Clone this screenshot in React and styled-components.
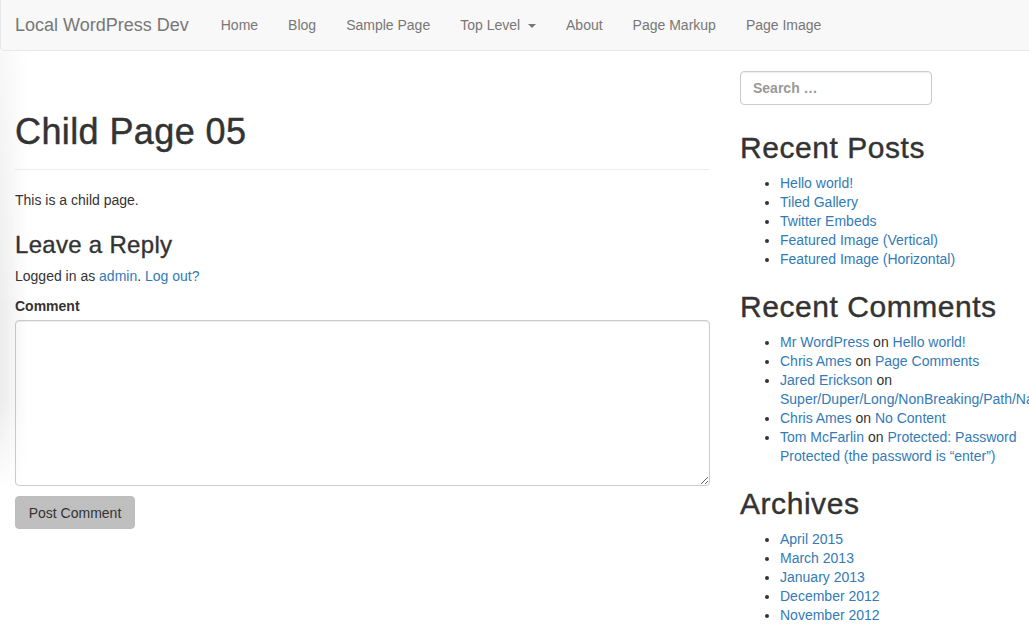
import React from 'react';
import styled, { createGlobalStyle } from 'styled-components';

const GlobalStyle = createGlobalStyle`
  html, body {
    margin: 0;
    padding: 0;
    background: #fff;
    overflow: hidden;
  }

  body {
    font-family: 'Liberation Sans', Arial, sans-serif;
    font-size: 14px;
    line-height: 20px;
    color: #333;
  }

  a {
    color: #337ab7;
    text-decoration: none;
  }
`;

const Page = styled.div`
  width: 1088px;
`;

const Navbar = styled.nav`
  display: flex;
  align-items: center;
  height: 50px;
  background: #f8f8f8;
  border-bottom: 1px solid #e7e7e7;
  border-left: 1px solid #e7e7e7;
  border-bottom-left-radius: 4px;
`;

const Brand = styled.a`
  padding: 15px 17px 15px 14px;
  font-size: 18px;
  line-height: 20px;
  color: #777;
`;

const NavList = styled.ul`
  display: flex;
  list-style: none;
  margin: 0;
  padding: 0;
`;

const NavLink = styled.a`
  display: block;
  padding: 15px;
  color: #777;
  line-height: 20px;
`;

const Caret = styled.span`
  display: inline-block;
  width: 0;
  height: 0;
  margin-left: 4px;
  vertical-align: middle;
  border-top: 4px solid #777;
  border-left: 4px solid transparent;
  border-right: 4px solid transparent;
`;

const Columns = styled.div`
  display: flex;
  align-items: flex-start;
`;

const Main = styled.main`
  width: 725px;
  box-sizing: border-box;
  padding: 0 15px;
`;

const PageHeader = styled.header`
  margin: 61px 0 20px;
  padding-bottom: 9px;
  border-bottom: 1px solid #eee;
`;

const Title = styled.h1`
  margin: 0 0 8px;
  font-size: 36px;
  line-height: 39.6px;
  font-weight: 500;
  letter-spacing: 0.4px;
  color: #333;
  -webkit-text-stroke: 0.45px #333;
`;

const Text = styled.p`
  margin: 0 0 10px;
`;

const ReplyTitle = styled.h3`
  margin: 22px 0 8px;
  font-size: 24px;
  line-height: 26.4px;
  font-weight: 500;
  letter-spacing: 0.3px;
  color: #333;
  -webkit-text-stroke: 0.35px #333;
`;

const Label = styled.label`
  display: block;
  margin-bottom: 4px;
  font-weight: bold;
`;

const TextArea = styled.textarea`
  display: block;
  box-sizing: border-box;
  width: 100%;
  height: 166px;
  margin: 0 0 10px;
  padding: 6px 12px;
  border: 1px solid #ccc;
  border-radius: 4px;
  box-shadow: inset 0 1px 1px rgba(0, 0, 0, 0.075);
  font: inherit;
`;

const SubmitButton = styled.button`
  display: block;
  box-sizing: border-box;
  width: 120px;
  height: 33px;
  padding: 6px 12px;
  border: 1px solid #bdbdbd;
  border-radius: 4px;
  background: #bfbfbf;
  color: #333;
  font: inherit;
`;

const Sidebar = styled.aside`
  display: flex;
  flex-direction: column;
  gap: 21px;
  width: 363px;
  box-sizing: border-box;
  padding: 20px 15px 0;
`;

const SearchInput = styled.input`
  box-sizing: border-box;
  width: 192px;
  height: 34px;
  margin-bottom: 5px;
  padding: 6px 12px;
  border: 1px solid #ccc;
  border-radius: 4px;
  box-shadow: inset 0 1px 1px rgba(0, 0, 0, 0.075);
  font: bold 14px 'Liberation Sans', Arial, sans-serif;

  &::placeholder {
    color: #999;
  }
`;

const WidgetTitle = styled.h2`
  margin: 0 0 10px;
  font-size: 30px;
  line-height: 33px;
  font-weight: 500;
  letter-spacing: 0.55px;
  color: #333;
  white-space: nowrap;
  -webkit-text-stroke: 0.4px #333;
`;

const WidgetList = styled.ul`
  margin: 0;
  padding-left: 40px;
  line-height: 19px;
`;

const Shade = styled.div`
  position: fixed;
  left: 0;
  top: 51px;
  width: 28px;
  height: 440px;
  pointer-events: none;
  background: linear-gradient(to right, rgba(0, 0, 0, 0.075), rgba(0, 0, 0, 0));
  -webkit-mask-image: linear-gradient(to bottom, rgba(0, 0, 0, 0.4), #000 60%, #000 80%, rgba(0, 0, 0, 0));
  mask-image: linear-gradient(to bottom, rgba(0, 0, 0, 0.4), #000 60%, #000 80%, rgba(0, 0, 0, 0));
`;

const navItems = ['Home', 'Blog', 'Sample Page', 'Top Level', 'About', 'Page Markup', 'Page Image'];

const recentPosts = [
  'Hello world!',
  'Tiled Gallery',
  'Twitter Embeds',
  'Featured Image (Vertical)',
  'Featured Image (Horizontal)',
];

const recentComments = [
  { author: 'Mr WordPress', post: 'Hello world!' },
  { author: 'Chris Ames', post: 'Page Comments' },
  { author: 'Jared Erickson', post: 'Super/Duper/Long/NonBreaking/Path/Name/To/A/Post' },
  { author: 'Chris Ames', post: 'No Content' },
  { author: 'Tom McFarlin', post: 'Protected: Password Protected (the password is “enter”)' },
];

const archives = ['April 2015', 'March 2013', 'January 2013', 'December 2012', 'November 2012'];

const Widget = ({ title, children }) => (
  <section>
    <WidgetTitle>{title}</WidgetTitle>
    <WidgetList>{children}</WidgetList>
  </section>
);

export default function App() {
  return (
    <Page>
      <GlobalStyle />
      <Navbar>
        <Brand href="#">Local WordPress Dev</Brand>
        <NavList>
          {navItems.map((item) => (
            <li key={item}>
              <NavLink href="#">
                {item}
                {item === 'Top Level' ? <> <Caret /></> : null}
              </NavLink>
            </li>
          ))}
        </NavList>
      </Navbar>
      <Columns>
        <Main>
          <PageHeader>
            <Title>Child Page 05</Title>
          </PageHeader>
          <Text>This is a child page.</Text>
          <ReplyTitle>Leave a Reply</ReplyTitle>
          <Text>
            Logged in as <a href="#">admin</a>. <a href="#">Log out?</a>
          </Text>
          <Label htmlFor="comment">Comment</Label>
          <TextArea id="comment" />
          <SubmitButton type="button">Post Comment</SubmitButton>
        </Main>
        <Sidebar>
          <SearchInput placeholder="Search …" />
          <Widget title="Recent Posts">
            {recentPosts.map((post) => (
              <li key={post}>
                <a href="#">{post}</a>
              </li>
            ))}
          </Widget>
          <Widget title="Recent Comments">
            {recentComments.map((c, i) => (
              <li key={i}>
                <a href="#">{c.author}</a> on <a href="#">{c.post}</a>
              </li>
            ))}
          </Widget>
          <Widget title="Archives">
            {archives.map((month) => (
              <li key={month}>
                <a href="#">{month}</a>
              </li>
            ))}
          </Widget>
        </Sidebar>
      </Columns>
      <Shade />
    </Page>
  );
}
